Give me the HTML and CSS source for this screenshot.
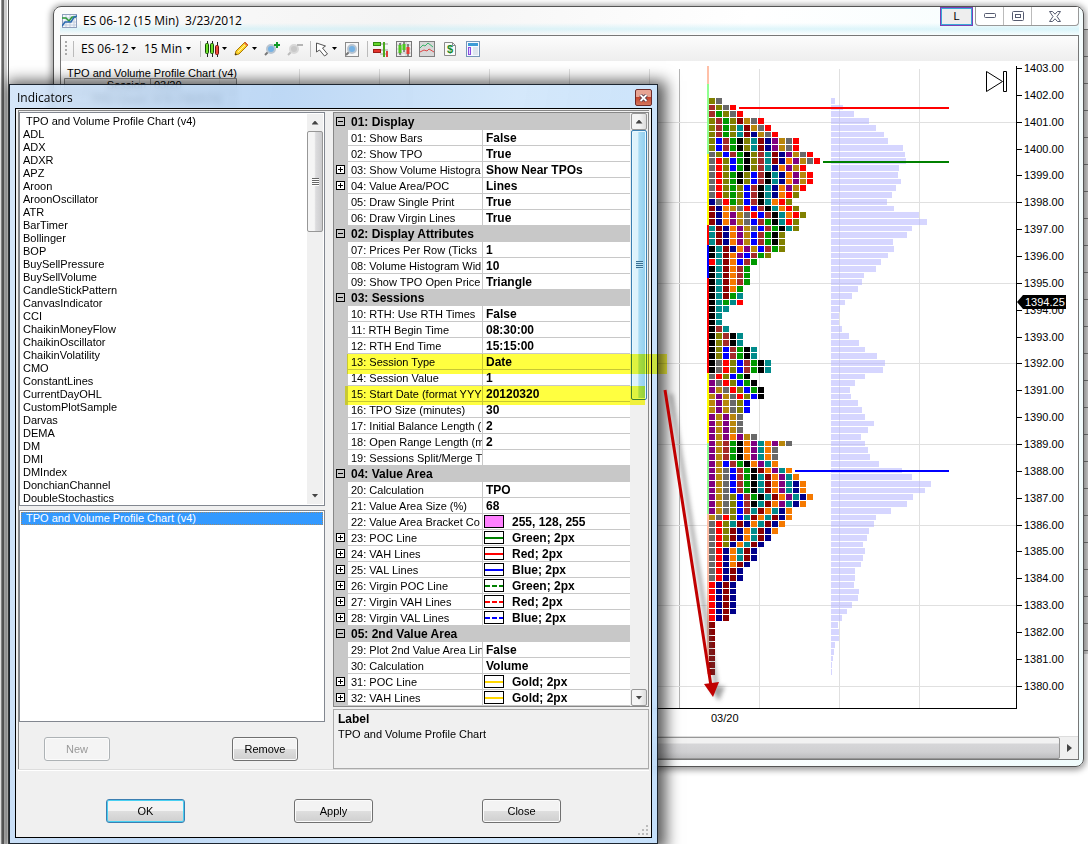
FILE: index.html
```html
<!DOCTYPE html>
<html lang="en">
<head>
<meta charset="utf-8">
<title>ES 06-12 (15 Min) - Indicators</title>
<link rel="stylesheet" href="styles.css">
</head>
<body>
<main class="desktop">
<div class="edge-left"></div>
<div class="edge-right"></div>

<section class="chart-window">
  <header class="title-bar">
    <svg class="app-icon" width="15" height="14" viewBox="0 0 15 14"><rect x=".5" y=".5" width="14" height="13" fill="#f4f7fc" stroke="#8fa0bd"/><path d="M4 1v12M8 1v12M12 1v12M1 4h13M1 8h13M1 11h13" stroke="#c3cede"/><path d="M0 4h4l3 3 3-4h4" fill="none" stroke="#2f9a3a" stroke-width="1.5"/><path d="M0 12l3-4 3 0 3 0 3-5 3-1" fill="none" stroke="#2a6bb0" stroke-width="1.5"/></svg>
    <h1 class="window-title">ES 06-12 (15 Min)&nbsp; 3/23/2012</h1>
    <button class="link-button">L</button>
    <div class="window-controls">
      <button aria-label="Minimize"><svg width="12" height="6"><rect x=".5" y=".5" width="11" height="4" rx="1" fill="#fff" stroke="#555b70"/></svg></button>
      <button aria-label="Restore"><svg width="12" height="10"><rect x=".5" y=".5" width="11" height="9" rx="1" fill="#fff" stroke="#555b70"/><rect x="3.500" y="3.500" width="5" height="3" fill="#fff" stroke="#555b70"/></svg></button>
      <button class="wide" aria-label="Close chart"><svg width="12" height="11" viewBox="0 0 12 11"><path d="M.5.5h3L6 3.200 8.500.5h3L8 5.500l3.500 5h-3L6 7.800 3.500 10.500h-3L4 5.500z" fill="#fff" stroke="#555b70"/></svg></button>
    </div>
  </header>
  <div class="chart-client">
    <nav class="toolbar">
      <span class="grip"></span><span class="sep"></span>
      <button class="tb-text instrument">ES 06-12<i class="arrow"></i></button>
      <button class="tb-text interval">15 Min<i class="arrow"></i></button>
      <span class="sep"></span>
      <button class="tb-drop" aria-label="Chart style"><svg width="16" height="16"><path d="M3.500 0v16M8.500 0v16M13.500 1v15" stroke="#222"/><rect x="1.500" y="2.500" width="3" height="10" rx="1" fill="#6be02a" stroke="#174d08"/><rect x="6.500" y="2.500" width="3" height="10" rx="1" fill="#6be02a" stroke="#174d08"/><rect x="11.500" y="4.500" width="3" height="9" rx="1" fill="#f04a3c" stroke="#701510"/></svg><i class="arrow"></i></button>
      <button class="tb-drop" aria-label="Drawing tools"><svg width="16" height="16"><path d="M1 14l1-4 9-9 3 3-9 9z" fill="#ffd52c" stroke="#a97a08"/><path d="M10 2l1-1 3 3-1 1z" fill="#e55b45"/><path d="M1 14l.6-2 1.400 1.400z" fill="#222"/><path d="M4 11l7-7" stroke="#fff3a0"/></svg><i class="arrow"></i></button>
      <button class="tb-icon" aria-label="Zoom in"><svg width="17" height="16"><path d="M1 14l4-4" stroke="#777" stroke-width="2"/><circle cx="7" cy="8" r="4" fill="#75b2e4" stroke="#b8c4d0" stroke-width="2"/><path d="M13 1v6M10 4h6" stroke="#119a28" stroke-width="2"/></svg></button>
      <button class="tb-icon narrow" aria-label="Zoom out"><svg width="17" height="16"><path d="M1 14l4-4" stroke="#bbb" stroke-width="2"/><circle cx="7" cy="8" r="4" fill="#c8c8c8" stroke="#d8d8d8" stroke-width="2"/><path d="M10 4h6" stroke="#b5b5b5" stroke-width="2"/></svg></button>
      <span class="sep"></span>
      <button class="tb-drop" aria-label="Cursor"><svg width="16" height="16"><path d="M2.500 2v9l3-2 5 6 3-2-5-6 3-2z" fill="#fff" stroke="#555"/></svg><i class="arrow"></i></button>
      <button class="tb-icon narrow" aria-label="Data box"><svg width="16" height="16"><rect x="1.500" y="1.500" width="13" height="14" fill="#f7f7f7" stroke="#8a8a8a"/><path d="M2 14l4-4" stroke="#777" stroke-width="2"/><circle cx="8" cy="8" r="4" fill="#75b2e4" stroke="#b8c4d0" stroke-width="2"/></svg></button>
      <span class="sep"></span>
      <div class="tb-group">
      <button class="tb-icon" aria-label="Chart trader"><svg width="16" height="16"><path d="M7 3h8M7 9h8M7 13h8" stroke="#c9c9c9" stroke-width="2"/><rect x=".5" y="1.500" width="7" height="3" fill="#66d52a" stroke="#2f8a12"/><rect x=".5" y="8.500" width="7" height="3" fill="#e3342c" stroke="#9c1d18"/><path d="M11 1v15" stroke="#4aa81f" stroke-width="2"/><path d="M14 10v6" stroke="#d8403a" stroke-width="2"/></svg></button>
      <button class="tb-icon" aria-label="Data series"><svg width="16" height="16"><rect x=".5" y=".5" width="15" height="15" fill="#efefef" stroke="#777"/><path d="M1 4h14M1 8h14M1 12h14M5 1v14M10 1v14" stroke="#c8c8c8"/><path d="M4 2v12M8 1v10M12 3v12" stroke="#222"/><path d="M4 4v8M8 3v6" stroke="#4cc91f" stroke-width="3"/><path d="M12 6v7" stroke="#e53b31" stroke-width="3"/></svg></button>
      <button class="tb-icon" aria-label="Indicators"><svg width="16" height="16"><rect x=".5" y=".5" width="15" height="15" fill="#d8d8d8" stroke="#808080"/><path d="M1 7l3-3 2 1 3-3 5 4" fill="none" stroke="#37b46a"/><path d="M1 11l4-2 3 1 2-2 5 3" fill="none" stroke="#dc4a4a"/></svg></button>
      <button class="tb-icon" aria-label="Strategies"><svg width="16" height="16"><path d="M2.500 1.500h8l3 3v10h-11z" fill="#fafafa" stroke="#8a8a8a"/><path d="M10.500 1.500v3h3" fill="none" stroke="#8a8a8a"/><text x="5" y="12" class="dollar">$</text></svg></button>
      <button class="tb-icon" aria-label="Properties"><svg width="16" height="16"><rect x="1.500" y=".5" width="13" height="15" fill="#f5f9ff" stroke="#7696b8"/><rect x="3" y="2" width="10" height="3" fill="#3c9bd6"/><rect x="3.500" y="6.500" width="2" height="7" fill="#e5d4ff" stroke="#8a4be0"/><path d="M8 7h5M8 9h5M8 11h5M8 13h5" stroke="#c5d0de"/></svg></button>
      </div>
    </nav>
    <svg class="chart" id="chart" viewBox="61 61 1017 675"></svg>
    <div class="h-scroll"><div class="h-thumb"></div><button class="h-arrow" aria-label="Scroll right"><svg width="5" height="8"><path d="M0 0l5 4-5 4z" fill="#444"/></svg></button></div>
  </div>
</section>

<section class="dialog" role="dialog" aria-labelledby="dlg-title">
  <header class="dialog-title">
    <h2 id="dlg-title">Indicators</h2>
    <button class="dialog-close" aria-label="Close dialog"><svg width="9" height="8" viewBox="0 0 9 8"><path d="M1.500 1l6 6M7.500 1l-6 6" stroke="#4b3442" stroke-width="3.500"/><path d="M1.500 1l6 6M7.500 1l-6 6" stroke="#fff" stroke-width="1.800"/></svg></button>
  </header>
  <div class="dialog-client">
    <div class="panel">
      <div class="left-col">
        <div class="list-box available">
          <ul role="listbox" aria-label="Available indicators">
            <li role="option" class="indent">TPO and Volume Profile Chart (v4)</li><li role="option">ADL</li><li role="option">ADX</li><li role="option">ADXR</li><li role="option">APZ</li><li role="option">Aroon</li><li role="option">AroonOscillator</li><li role="option">ATR</li><li role="option">BarTimer</li><li role="option">Bollinger</li><li role="option">BOP</li><li role="option">BuySellPressure</li><li role="option">BuySellVolume</li><li role="option">CandleStickPattern</li><li role="option">CanvasIndicator</li><li role="option">CCI</li><li role="option">ChaikinMoneyFlow</li><li role="option">ChaikinOscillator</li><li role="option">ChaikinVolatility</li><li role="option">CMO</li><li role="option">ConstantLines</li><li role="option">CurrentDayOHL</li><li role="option">CustomPlotSample</li><li role="option">Darvas</li><li role="option">DEMA</li><li role="option">DM</li><li role="option">DMI</li><li role="option">DMIndex</li><li role="option">DonchianChannel</li><li role="option">DoubleStochastics</li>
          </ul>
          <div class="v-scroll">
            <button class="flat" aria-label="Scroll up"><i class="tri up"></i></button>
            <div class="v-thumb gray"><i class="ridges"></i></div>
            <span class="track"></span>
            <button class="flat" aria-label="Scroll down"><i class="tri down"></i></button>
          </div>
        </div>
        <div class="list-box applied">
          <ul role="listbox" aria-label="Applied indicators"><li role="option" aria-selected="true" class="indent selected">TPO and Volume Profile Chart (v4)</li></ul>
        </div>
        <div class="list-actions">
          <button class="btn small" disabled>New</button>
          <button class="btn small">Remove</button>
        </div>
      </div>
      <div class="right-col">
        <div class="props">
          <table class="prop-table">
            <colgroup><col class="c-gutter"><col class="c-name"><col></colgroup>
            <tbody>
            <tr class="cat"><td><button class="tog minus" aria-label="Collapse"></button></td><th colspan="2">01: Display</th></tr>
            <tr><td></td><th>01: Show Bars</th><td>False</td></tr>
            <tr><td></td><th>02: Show TPO</th><td>True</td></tr>
            <tr><td><button class="tog plus" aria-label="Expand"></button></td><th>03: Show Volume Histogra</th><td>Show Near TPOs</td></tr>
            <tr><td><button class="tog plus" aria-label="Expand"></button></td><th>04: Value Area/POC</th><td>Lines</td></tr>
            <tr><td></td><th>05: Draw Single Print</th><td>True</td></tr>
            <tr><td></td><th>06: Draw Virgin Lines</th><td>True</td></tr>
            <tr class="cat"><td><button class="tog minus" aria-label="Collapse"></button></td><th colspan="2">02: Display Attributes</th></tr>
            <tr><td></td><th>07: Prices Per Row (Ticks</th><td>1</td></tr>
            <tr><td></td><th>08: Volume Histogram Wid</th><td>10</td></tr>
            <tr><td></td><th>09: Show TPO Open Price</th><td>Triangle</td></tr>
            <tr class="cat"><td><button class="tog minus" aria-label="Collapse"></button></td><th colspan="2">03: Sessions</th></tr>
            <tr><td></td><th>10: RTH: Use RTH Times</th><td>False</td></tr>
            <tr><td></td><th>11: RTH Begin Time</th><td>08:30:00</td></tr>
            <tr><td></td><th>12: RTH End Time</th><td>15:15:00</td></tr>
            <tr><td></td><th>13: Session Type</th><td>Date</td></tr>
            <tr><td></td><th>14: Session Value</th><td>1</td></tr>
            <tr><td></td><th>15: Start Date (format YYY</th><td>20120320</td></tr>
            <tr><td></td><th>16: TPO Size (minutes)</th><td>30</td></tr>
            <tr><td></td><th>17: Initial Balance Length (</th><td>2</td></tr>
            <tr><td></td><th>18: Open Range Length (m</th><td>2</td></tr>
            <tr><td></td><th>19: Sessions Split/Merge T</th><td></td></tr>
            <tr class="cat"><td><button class="tog minus" aria-label="Collapse"></button></td><th colspan="2">04: Value Area</th></tr>
            <tr><td></td><th>20: Calculation</th><td>TPO</td></tr>
            <tr><td></td><th>21: Value Area Size (%)</th><td>68</td></tr>
            <tr><td></td><th>22: Value Area Bracket Co</th><td class="sw"><i class="swatch fill"></i>255, 128, 255</td></tr>
            <tr><td><button class="tog plus" aria-label="Expand"></button></td><th>23: POC Line</th><td class="sw"><i class="swatch green"></i>Green; 2px</td></tr>
            <tr><td><button class="tog plus" aria-label="Expand"></button></td><th>24: VAH Lines</th><td class="sw"><i class="swatch red"></i>Red; 2px</td></tr>
            <tr><td><button class="tog plus" aria-label="Expand"></button></td><th>25: VAL Lines</th><td class="sw"><i class="swatch blue"></i>Blue; 2px</td></tr>
            <tr><td><button class="tog plus" aria-label="Expand"></button></td><th>26: Virgin POC Line</th><td class="sw"><i class="swatch green dash"></i>Green; 2px</td></tr>
            <tr><td><button class="tog plus" aria-label="Expand"></button></td><th>27: Virgin VAH Lines</th><td class="sw"><i class="swatch red dash"></i>Red; 2px</td></tr>
            <tr><td><button class="tog plus" aria-label="Expand"></button></td><th>28: Virgin VAL Lines</th><td class="sw"><i class="swatch blue dash"></i>Blue; 2px</td></tr>
            <tr class="cat"><td><button class="tog minus" aria-label="Collapse"></button></td><th colspan="2">05: 2nd Value Area</th></tr>
            <tr><td></td><th>29: Plot 2nd Value Area Lin</th><td>False</td></tr>
            <tr><td></td><th>30: Calculation</th><td>Volume</td></tr>
            <tr><td><button class="tog plus" aria-label="Expand"></button></td><th>31: POC Line</th><td class="sw"><i class="swatch gold"></i>Gold; 2px</td></tr>
            <tr><td><button class="tog plus" aria-label="Expand"></button></td><th>32: VAH Lines</th><td class="sw"><i class="swatch gold"></i>Gold; 2px</td></tr>
            </tbody>
          </table>
          <div class="v-scroll raised">
            <button aria-label="Scroll up"><i class="tri up"></i></button>
            <div class="v-thumb hot"><i class="ridges"></i></div>
            <span class="track"></span>
            <button aria-label="Scroll down"><i class="tri down"></i></button>
          </div>
        </div>
        <div class="description"><strong>Label</strong><p>TPO and Volume Profile Chart</p></div>
      </div>
    </div>
    <footer class="dialog-actions">
      <button class="btn default">OK</button>
      <button class="btn">Apply</button>
      <button class="btn">Close</button>
      <svg class="size-grip" width="10" height="10"><path d="M8 0h2v2h-2zM8 4h2v2h-2zM4 4h2v2h-2zM8 8h2v2h-2zM4 8h2v2h-2zM0 8h2v2h-2z" fill="#bcbcbc"/></svg>
    </footer>
  </div>
</section>

<div class="marker session-type"></div>
<div class="marker start-date"></div>
<svg class="pointer-arrow" width="80" height="330" viewBox="655 380 80 330">
  <defs><filter id="soft" x="-50%" y="-5%" width="200%" height="110%"><feGaussianBlur stdDeviation="2"/></filter></defs>
  <g filter="url(#soft)" opacity=".5" transform="translate(6 4)"><path d="M665 390L711 686" stroke="#555" stroke-width="4"/><path d="M704 684l15-2-6 15z" fill="#444"/></g>
  <path d="M665 390L711 686" stroke="#c00000" stroke-width="3"/><path d="M704 684l15-2-6 15z" fill="#c00000"/>
</svg>
</main>
<script src="chart.js"></script>
</body>
</html>
```

FILE: styles.css
```css
* { box-sizing: border-box; }
body { margin: 0; background: #fff; font: 11px/13px "Liberation Sans", Arial, sans-serif; color: #000; }
button { font: inherit; color: inherit; margin: 0; padding: 0; border: 0; background: none; }
h1, h2, p, ul { margin: 0; padding: 0; font-size: inherit; font-weight: normal; }
ul { list-style: none; }
svg { display: block; flex: none; }

.desktop { position: relative; min-height: 844px; overflow: hidden; }
.edge-left { position: absolute; left: 0; top: 0; bottom: 0; width: 9px; background: linear-gradient(90deg, #fff 0 1px, #999 1px 2px, #666 2px 4px, #ccc 4px 7px, #fff 7px 8px, #555 8px 9px); }
.edge-right { position: absolute; right: 0; top: 29px; width: 4px; height: 625px; background: repeating-linear-gradient(#777 0 1px, #d2d2d2 1px 27px); }

.chart-window { position: absolute; left: 53px; right: 4px; top: 6px; border: 1px solid #555; border-radius: 8px; background: linear-gradient(100deg, #fbfbfb, #f4f4f4 30%, #fff 60%, #f0fcfd); box-shadow: 0 1px 6px 2px rgba(0,0,0,.4); padding: 0 4px 6px 6px; }
.title-bar { display: flex; align-items: flex-start; height: 28px; background: linear-gradient(transparent 16px, rgba(190,235,245,.5) 22px, transparent 28px); }
.app-icon { margin: 7px 6px 0 2px; }
.window-title { flex: 1; font: 12px/16px "Open Sans", sans-serif; padding-top: 6px; white-space: nowrap; }
.link-button { width: 33px; height: 19px; border: 2px solid #3aa7d8; outline: 1px solid #7a3fb5; outline-offset: -1px; background: #eee; margin-right: 2px; }
.window-controls { display: flex; height: 19px; border: 1px solid #999; border-top: 0; border-radius: 0 0 4px 4px; background: #fff; }
.window-controls button { width: 28px; display: flex; align-items: center; justify-content: center; border-right: 1px solid #bbb; }
.window-controls .wide { width: 46px; border-right: 0; }

.chart-client { border: 1px solid #777; background: #fff; }
.toolbar { display: flex; align-items: center; height: 25px; padding-left: 3px; background: linear-gradient(#fcfcfc, #eee); font: 12px/16px "Open Sans", sans-serif; }
.grip { width: 4px; height: 15px; background: repeating-linear-gradient(#aaa 0 2px, transparent 2px 4px); clip-path: inset(0 1px); }
.sep { width: 1px; height: 16px; margin: 0 3px 0 5px; background: #bbb; }
.tb-text, .tb-drop { display: flex; align-items: center; white-space: nowrap; }
.tb-text { justify-content: space-between; padding: 0 4px; }
.instrument { width: 63px; }
.interval { width: 55px; }
.tb-drop { width: 30px; gap: 2px; }
.tb-icon { width: 23px; display: flex; }
.tb-icon.narrow { width: 18px; }
.tb-group { display: flex; margin-left: 2px; }
.arrow { width: 5px; height: 3px; background: #000; clip-path: polygon(0 0, 100% 0, 50% 100%); }
.dollar { font: bold 11px "Liberation Sans", sans-serif; fill: #188a28; }

.chart { width: 100%; height: auto; font: 11px "Liberation Sans", sans-serif; }
.h-scroll { display: flex; height: 23px; background: #f0f0f0; border-top: 1px solid #ddd; }
.h-thumb { flex: 1; border: 1px solid #979797; border-radius: 2px; background: linear-gradient(#f2f2f2 25%, #d6d6d8 30%, #d0d0d2 70%, #bebec0); }
.h-arrow { width: 18px; display: flex; align-items: center; justify-content: center; }

.dialog { position: absolute; left: 9px; top: 84px; width: 649px; border: 1px solid #1d2630; padding: 0 5px; background: linear-gradient(100deg, rgba(203,224,247,.8), rgba(178,209,243,.85) 35%, rgba(205,228,250,.85) 65%, rgba(190,220,250,.9)); backdrop-filter: blur(3px); box-shadow: 3px 2px 14px 5px rgba(0,0,0,.65); padding-bottom: 5px; }
.dialog-title { display: flex; justify-content: space-between; height: 23px; padding: 4px 0 0 2px; }
.dialog-title h2 { font: 12px/18px "Open Sans", sans-serif; }
.dialog-close { width: 17px; height: 17px; border: 1px solid #6d2a28; border-radius: 2px; background: linear-gradient(#e8a493 45%, #c5442c 50%, #d4765c); display: flex; align-items: center; justify-content: center; }
.dialog-client { border: 1px solid #000; background: #f0f0f0; padding: 1px 2px 0; }
.panel { display: grid; grid-template-columns: 306px 1fr; column-gap: 8px; border: solid #888; border-width: 1px 0 0 1px; box-shadow: 0 1px 0 #ddd, 0 2px 0 #fff; padding-top: 1px; }
.list-box { display: flex; background: #fff; border: 1px solid #828790; padding: 1px; }
.list-box ul { flex: 1; overflow: hidden; padding-top: 1px; }
.list-box li { padding-left: 2px; white-space: nowrap; line-height: 13px; }
.list-box .indent { padding-left: 5px; }
.available { height: 394px; margin-bottom: 4px; }
.applied { height: 212px; }
.applied ul { padding-top: 0; }
.selected { background: #3399ff; color: #fff; outline: 1px dotted #9a8a70; outline-offset: -1px; }
.list-actions { display: flex; justify-content: space-between; padding: 15px 27px 0 25px; }
.btn { width: 79px; height: 24px; border: 1px solid #707070; border-radius: 3px; background: linear-gradient(#f3f3f3 48%, #dedede 52%, #cfcfcf); box-shadow: inset 0 0 0 1px #fbfbfb; }
.btn.small { width: 66px; }
.btn:disabled { color: #999; border-color: #adb2b5; background: #f4f4f4; }
.btn.default { border-color: #3c7fb1; box-shadow: inset 0 0 0 1px #48d0f2; }

.v-scroll { width: 16px; display: flex; flex-direction: column; background: #f0f0f0; }
.v-scroll button { height: 17px; display: flex; align-items: center; justify-content: center; }
.raised button { border: 1px solid #979797; border-radius: 2px; background: linear-gradient(90deg, #f5f5f5 50%, #dcdcdc); }
.track { flex: 1; }
.tri { width: 7px; height: 4px; background: #444; }
.up { clip-path: polygon(50% 0, 100% 100%, 0 100%); }
.down { clip-path: polygon(0 0, 100% 0, 50% 100%); }
.v-thumb { display: flex; align-items: center; justify-content: center; border-radius: 2px; }
.gray { height: 101px; border: 1px solid #979797; background: linear-gradient(90deg, #f5f5f5 45%, #dcdcde 55%, #cbcbcd); }
.hot { height: 270px; border: 1px solid #3c7fb1; background: linear-gradient(90deg, #dff3fc 40%, #a9dcf5 50%, #90cdee); box-shadow: inset 0 0 0 1px #e8f8ff; }
.ridges { width: 7px; height: 8px; background: repeating-linear-gradient(#666 0 1px, #fff 1px 2px); }
.hot .ridges { background: repeating-linear-gradient(#3a6f92 0 1px, #bfe5f7 1px 2px); }

.right-col { display: flex; flex-direction: column; gap: 2px; min-width: 0; }
.props { display: flex; justify-content: space-between; border: 1px solid #888; background: #f0f0f0; padding-right: 1px; }
.prop-table { width: 296px; table-layout: fixed; border-collapse: separate; border-spacing: 0; background: #fff; border-top: 1px solid #c8c8c8; }
.c-gutter { width: 14px; }
.c-name { width: 135px; }
.prop-table td, .prop-table th { height: 16px; padding: 1px 0 0; line-height: 14px; text-align: left; white-space: nowrap; overflow: hidden; border-bottom: 1px solid #c8c8c8; }
.prop-table th { font-weight: normal; padding-left: 3px; border-right: 1px solid #c8c8c8; }
.prop-table td { font-size: 12px; font-weight: bold; padding-left: 3px; }
.prop-table td:first-child { background: #c8c8c8; padding: 0 0 0 2px; }
.prop-table .cat th { background: #c8c8c8; font-size: 12px; font-weight: bold; }
.tog { display: block; width: 9px; height: 9px; border: 1px solid #000; background: linear-gradient(#000, #000) center / 5px 1px no-repeat; }
.tog.plus { background: linear-gradient(#000, #000) center / 5px 1px no-repeat, linear-gradient(#000, #000) center / 1px 5px no-repeat, #fff; }
.prop-table .sw { padding-left: 1px; }
.swatch { display: inline-block; vertical-align: top; width: 20px; height: 13px; margin: 0 8px 0 0; border: 1px solid #000; background: linear-gradient(currentColor, currentColor) center / 100% 2px no-repeat; }
.fill { background: #ff80ff; }
.green { color: #008000; }
.red { color: #f00; }
.blue { color: #00f; }
.gold { color: #ffd700; }
.dash { background: repeating-linear-gradient(90deg, currentColor 0 5px, transparent 5px 7px) center / 100% 2px no-repeat; }
.description { flex: 1; border: 1px solid #aaa; padding: 2px 4px; }
.description strong { display: block; font-size: 12px; line-height: 15px; }
.description p { line-height: 15px; padding-bottom: 24px; }

.dialog-actions { position: relative; display: flex; justify-content: space-between; padding: 30px 88px 14px; }
.size-grip { position: absolute; right: 1px; bottom: 2px; }

.marker { position: absolute; background: #ffff40; mix-blend-mode: multiply; }
.session-type { left: 347px; top: 354px; width: 320px; height: 20px; }
.start-date { left: 345px; top: 386px; width: 300px; height: 19px; }
.pointer-arrow { position: absolute; left: 655px; top: 380px; pointer-events: none; }
```

FILE: chart.js
```js
const colors = { o: '#808000', g: '#696969', b: '#a52a2a', n: '#009900', r: '#ff0000', m: '#8b0000', y: '#b8860b', t: '#008b8b', v: '#00008b', u: '#0000ff', k: '#000000', p: '#800080', a: '#f57900' };

// One entry per tick from 1401.75 down: period colours, then volume
const rows = `og 4|bogr 12|bnogr 23|obnomygr 38|obnotmygr 45|obnotmvygr 53|oubnkotmvpygr 57|oubnkotmvpygr 72|goubnkobtmvpygr 74|grounkobtmvapygr 75|grounkobtvapyr 68|gronkoubktvapyr 67|gronkoubktvapyr 70|gronoubktvapyr 65|gronoubktvaro 61|vgrnoubktaro 56|mvaygrubktaro 63|mvapygrubktaro 88|mvapygubnktro 96|tmvapygubnkto 81|tmvapyubnko 76|tmvapyubnko 62|ktmvapyubno 63|ktmapubno 57|rtmaubn 50|ktmabn 45|ktmabn 33|ktmabn 31|ktman 27|ktmnt 21|ktntr 14|ktt 9|kt 8|kt 8|kbt 11|kobkt 18|kobkt 28|koubnkt 34|koubnkt 46|kgroubnkt 54|kgroubnkt 52|grounk 34|pgrounk 24|pygrounk 19|ypygrouk 20|ypygou 27|ypygou 31|pypyg 34|pypyg 43|pypyg 37|pypapyg 30|pybnkaptapyg 34|pybnkaptag 37|pybnkaptag 39|pyubnkapta 48|pygubnkmapta 71|pygubnktmapta 81|pygubnktmaptva 100|pygubnktmaptva 94|pygoubnktmaptva 82|pygoubktmaptva 76|pygoubtmatva 60|ygroutmatmva 45|grotmvatmva 43|gromvatmva 38|gromvatmv 36|grovatmv 32|grvatmv 34|grvatmv 32|grvamv 30|grvmv 24|grvmv 24|rvmv 23|rvmv 28|rvmv 27|rvmv 21|rvmv 16|rvm 11|m 7|m 8|m 8|m 4|m 3|m 2|m 1|m 1`.split('|');

const priceY = price => Math.round(68 + (1403 - price) * 26.86);
const rowY = i => Math.round(98 + i * 6.72);
const rect = (x, y, w, h, fill) => `<rect x="${x}" y="${y}" width="${w}" height="${h}" fill="${fill}"/>`;
const text = (x, y, str, attrs = '') => `<text x="${x}" y="${y}" ${attrs}>${str}</text>`;
let out = '';

[219, 299, 379, 489, 569, 649, 759, 839, 919].forEach(x => out += rect(x, 69, 1, 639, '#e0e0e0'));
[139, 409, 679].forEach(x => out += rect(x, 69, 1, 639, '#b4b4b4'));
for (let p = 1401; p >= 1380; p -= 3) out += rect(62, priceY(p), 954, 1, '#e0e0e0');

[[66, 84, '#ffc0a8'], [84, 154, '#90ff90'], [154, 225, '#ffff00'], [225, 245, '#ff0000'], [245, 278, '#0000ff'], [278, 373, '#ff0000'], [373, 443, '#ffff00'], [443, 514, '#90ff90'], [514, 674, '#ffc0a8']]
  .forEach(([a, b, c]) => out += rect(707, a, 2, b - a, c));

rows.forEach((row, i) => {
  const [cells, volume] = row.split(' ');
  const y = rowY(i);
  const h = rowY(i + 1) - y - 1;
  [...cells].forEach((c, k) => out += rect(709 + k * 7, y, 6, h, colors[c]));
  out += `<rect x="831" y="${y}" width="${volume}" height="${h}" fill="#b4b4ff" fill-opacity=".55"/>`;
});

out += rect(739, 107, 210, 2, '#ff0000') + rect(823, 161, 126, 2, '#008000') + rect(795, 470, 154, 2, '#0000ff');

out += rect(1016, 66, 1, 643, '#000') + rect(61, 708, 956, 1, '#000');
for (let p = 1403; p >= 1380; p--) {
  out += rect(1017, priceY(p), 5, 1, '#000') + text(1024, priceY(p) + 4, p + '.00');
}
out += '<path d="M1017 302l6-7h43v14h-43z"/>' + text(1025, 306, '1394.25', 'fill="#fff"');
out += text(711, 722, '03/20');
out += '<path d="M986.500 71.500v20l16-10zM1003.500 71.500h3v20h-3z" fill="none" stroke="#000"/>';

out += text(67, 77, 'TPO and Volume Profile Chart (v4)');
out += '<path d="M64.500 78.500h172v28h-172zM150.500 78.500v28M64 92.500h172" fill="#c8c8c8" fill-opacity=".5" stroke="#888"/>';
out += text(146, 89, 'Session', 'text-anchor="end"') + text(154, 89, '03/20');
out += text(146, 103, 'TPO Count', 'text-anchor="end"') + text(154, 103, '679 (760/576)');

document.getElementById('chart').innerHTML = out;
```
